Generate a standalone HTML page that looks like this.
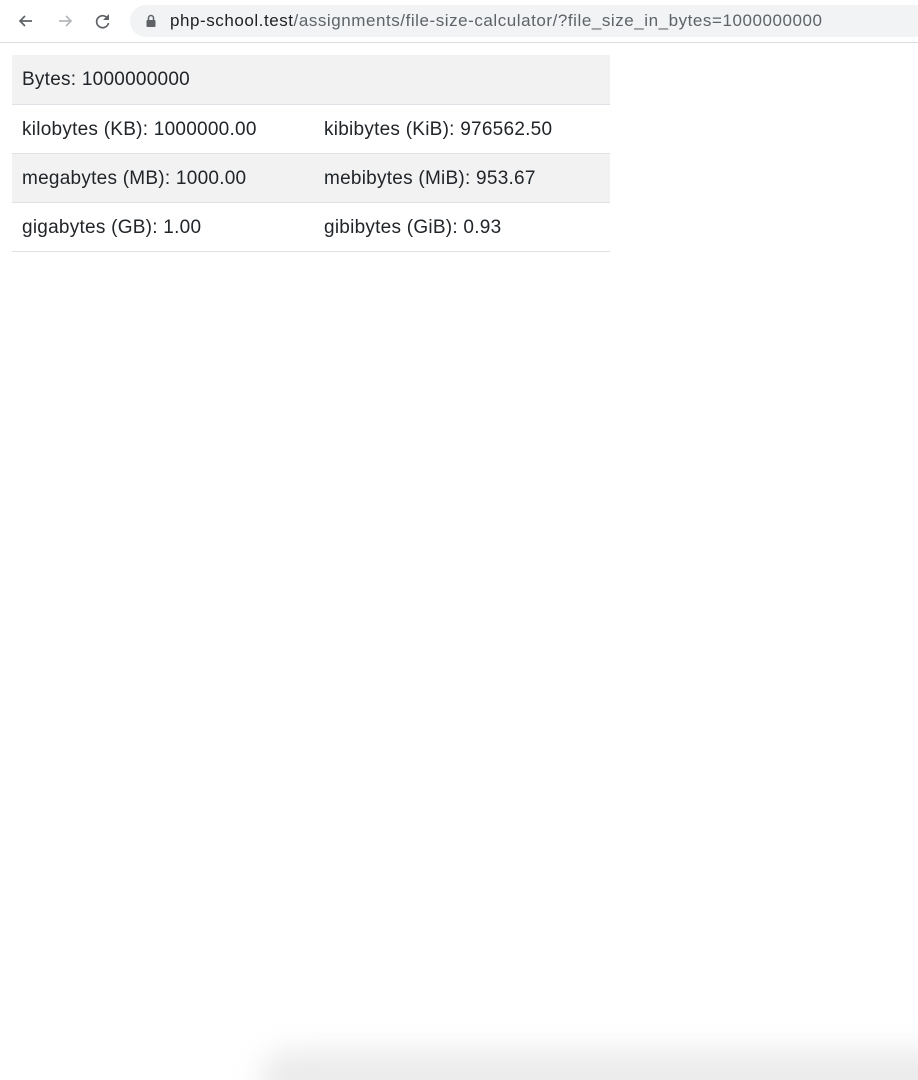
<!DOCTYPE html>
<html><head><meta charset="utf-8"><style>
html,body{margin:0;padding:0;background:#fff;width:918px;height:1080px;overflow:hidden;position:relative;font-family:"Liberation Sans",sans-serif;}
.bar{position:absolute;left:0;top:0;width:918px;height:42px;border-bottom:1px solid #dadce0;background:#fff;}
.url{position:absolute;left:130px;top:5px;width:800px;height:32px;border-radius:16px;background:#f1f3f4;}
.url span{position:absolute;left:40px;top:6px;font-size:17px;letter-spacing:0.55px;color:#5f6368;white-space:nowrap;}
.url b{font-weight:normal;color:#202124;}
table{position:absolute;left:12px;top:55px;width:598px;border-collapse:collapse;font-size:19px;letter-spacing:0.25px;color:#212529;}
td{height:49px;padding:2px 10px 0;box-sizing:border-box;border-bottom:1px solid #dee2e6;vertical-align:middle;}
tr.g td{background:#f2f2f2;}
.shadow{position:absolute;left:260px;right:-60px;bottom:-30px;height:60px;background:#ebebeb;border-radius:60px;filter:blur(14px);}
</style></head><body>
<div class="bar">
<svg style="position:absolute;left:16px;top:11px" width="20" height="20" viewBox="0 0 20 20"><path d="M16 10H4M9 5l-5 5 5 5" stroke="#5f6368" stroke-width="1.7" fill="none"/></svg>
<svg style="position:absolute;left:55px;top:11px" width="20" height="20" viewBox="0 0 20 20"><path d="M4 10h12M11 5l5 5-5 5" stroke="#b5b7ba" stroke-width="1.7" fill="none"/></svg>
<svg style="position:absolute;left:93px;top:11px" width="20" height="20" viewBox="0 0 20 20"><path d="M15 8A6 6 0 1 0 15.5 12" stroke="#5f6368" stroke-width="1.7" fill="none"/><path d="M16 3v6h-6z" fill="#5f6368"/></svg>
<div class="url">
<svg style="position:absolute;left:16px;top:9px" width="10" height="13" viewBox="0 0 10 13"><path d="M2.5 6V4a2.5 2.5 0 0 1 5 0v2" stroke="#5f6368" stroke-width="1.5" fill="none"/><rect x="0.5" y="6" width="9" height="7" rx="1" fill="#5f6368"/></svg>
<span><b>php-school.test</b>/assignments/file-size-calculator/?file_size_in_bytes=1000000000</span>
</div>
</div>
<table>
<tr class="g"><td colspan="2">Bytes: 1000000000</td></tr>
<tr><td style="width:302px">kilobytes (KB): 1000000.00</td><td>kibibytes (KiB): 976562.50</td></tr>
<tr class="g"><td>megabytes (MB): 1000.00</td><td>mebibytes (MiB): 953.67</td></tr>
<tr><td>gigabytes (GB): 1.00</td><td>gibibytes (GiB): 0.93</td></tr>
</table>
<div class="shadow"></div>
</body></html>
